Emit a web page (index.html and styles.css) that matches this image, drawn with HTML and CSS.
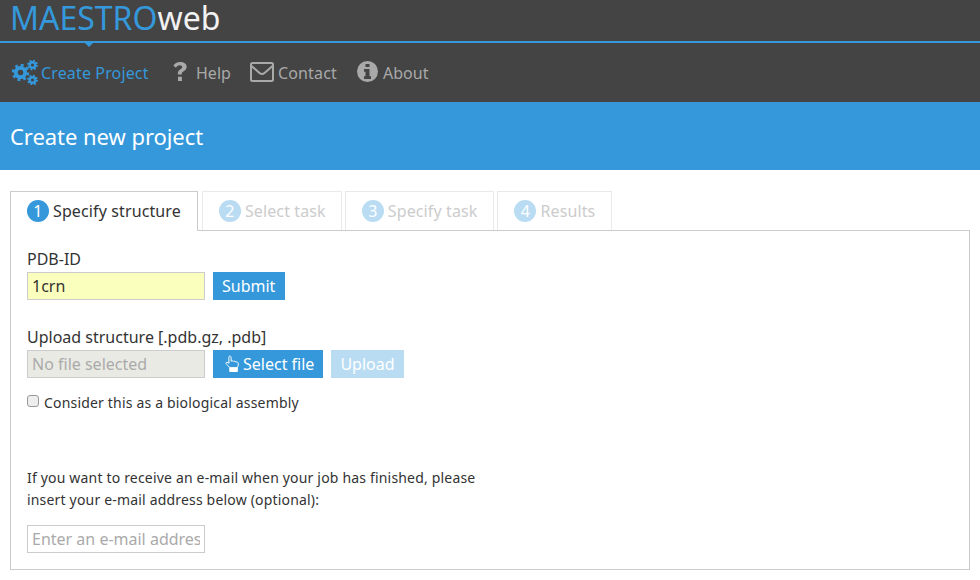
FILE: index.html
```html
<!DOCTYPE html>
<html lang="en">
<head>
<meta charset="utf-8">
<title>MAESTROweb</title>
<link rel="stylesheet" href="styles.css">
</head>
<body>
<header class="topbar">
  <h1 class="brand"><span class="brand-accent">MAESTRO</span>web</h1>
</header>
<nav class="nav">
  <a class="nav-item active">
    <svg class="icon-gears" width="28" height="26" viewBox="0 0 28 26" fill="none" stroke="#3498db">
      <circle cx="9.500" cy="13.500" r="4.700" stroke-width="3.800"/>
      <circle cx="9.500" cy="13.500" r="7.400" stroke-width="2.600" stroke-dasharray="2.900 2.910"/>
      <circle cx="21.500" cy="6" r="2.800" stroke-width="2.400"/>
      <circle cx="21.500" cy="6" r="4.500" stroke-width="1.800" stroke-dasharray="1.800 1.730"/>
      <circle cx="21.500" cy="21" r="2.800" stroke-width="2.400"/>
      <circle cx="21.500" cy="21" r="4.500" stroke-width="1.800" stroke-dasharray="1.800 1.730"/>
    </svg>
    <span>Create Project</span>
  </a>
  <a class="nav-item help">
    <svg class="icon-help" width="14" height="19" viewBox="0 0 14 19" fill="#a9a9a9">
      <path d="M7.300 0C3.700 0 1.500 1.600.4 3.700l2.600 2c.8-1.200 1.900-2.400 3.800-2.400 1.300 0 2.400.7 2.400 1.800 0 2.200-4.300 2.500-4.300 6.300v1h3.800v-.7c0-2.200 5-3 5-7C13.700 1.900 10.800 0 7.300 0zM5 14.800h3.900V19H5z"/>
    </svg>
    <span>Help</span>
  </a>
  <a class="nav-item contact">
    <svg class="icon-raised" width="24" height="20" viewBox="0 0 24 20" fill="none" stroke="#a9a9a9">
      <rect x="1" y="1" width="22" height="18" rx="1.500" stroke-width="2"/>
      <path d="M1.500 4l8 7c1.500 1.300 3.500 1.300 5 0l8-7" stroke-width="2"/>
    </svg>
    <span>Contact</span>
  </a>
  <a class="nav-item about">
    <svg class="icon-raised" width="21" height="21" viewBox="0 0 21 21">
      <circle cx="10.500" cy="10.500" r="10.500" fill="#a9a9a9"/>
      <path fill="#444" d="M8.500 3h4v3h-4zM7 8h5.500v7.200H14V18H7v-2.800h1.500V10.800H7z"/>
    </svg>
    <span>About</span>
  </a>
</nav>
<section class="banner">
  <h2 class="banner-title">Create new project</h2>
</section>
<main class="content">
  <ul class="tabs">
    <li class="tab active"><span class="num">1</span>Specify structure</li>
    <li class="tab"><span class="num">2</span>Select task</li>
    <li class="tab"><span class="num">3</span>Specify task</li>
    <li class="tab"><span class="num">4</span>Results</li>
  </ul>
  <div class="panel">
    <label class="label">PDB-ID</label>
    <div class="row">
      <input class="field filled" type="text" value="1crn">
      <button class="btn btn-submit">Submit</button>
    </div>
    <label class="label upload-label">Upload structure [.pdb.gz, .pdb]</label>
    <div class="row">
      <input class="field disabled" type="text" placeholder="No file selected" disabled>
      <button class="btn">
        <svg class="hand" width="15" height="18" viewBox="0 0 15 18" fill="none" stroke="#fff" stroke-width="1" stroke-linejoin="round">
          <path d="M4 1.500c.8-.8 1.900-.3 2 .6l.2 4.100c1-.5 1.900-.4 2.500.2.900-.3 1.600-.1 2.100.5 1.200-.2 2.500.4 2.600 1.800 0 1.500-.5 2.800-1 4H4.800c-.8-1.400-2.300-2.500-3.400-3.500-.8-.7-.5-1.800.4-1.900.8-.1 1.600.4 2.200 1l-.2-5.800c0-.4 0-.7.200-1z"/>
          <path d="M4.800 13h7.500v3.500H4.800z" fill="#fff"/>
        </svg>Select file
      </button>
      <button class="btn faded">Upload</button>
    </div>
    <label class="check">
      <input class="checkbox" type="checkbox">
      <span>Consider this as a biological assembly</span>
    </label>
    <p class="note">If you want to receive an e-mail when your job has finished, please<br>insert your e-mail address below (optional):</p>
    <input class="field" type="text" placeholder="Enter an e-mail address">
  </div>
</main>
</body>
</html>
```
FILE: styles.css
```css
* { box-sizing: border-box; }
html, body { margin: 0; padding: 0; }
body {
  width: 980px;
  height: 580px;
  overflow: hidden;
  background: #fff;
  color: #333;
  font-family: "Noto Sans", "Open Sans", "Liberation Sans", sans-serif;
}
.topbar {
  position: relative;
  height: 43px;
  background: #444;
  border-bottom: 2px solid #3498db;
}
.topbar::after {
  content: "";
  position: absolute;
  left: 83px;
  top: 41px;
  border-left: 6px solid transparent;
  border-right: 6px solid transparent;
  border-top: 6px solid #3498db;
}
.brand {
  margin: 0;
  padding: 2px 0 0 10px;
  font-size: 32px;
  font-weight: 400;
  line-height: 32px;
  color: #f2f2f2;
}
.brand-accent { color: #3498db; }
.nav {
  display: flex;
  height: 59px;
  background: #444;
  padding: 15px 0 0 11px;
}
.nav-item {
  display: flex;
  align-items: center;
  height: 30px;
  font-size: 16px;
  letter-spacing: 0.14px;
  color: #a9a9a9;
}
.nav-item.active { color: #3498db; width: 162px; gap: 2px; }
.nav-item.help { width: 77px; gap: 9px; letter-spacing: 0; }
.nav-item.contact { width: 107px; gap: 4px; }
.nav-item.about { gap: 5px; letter-spacing: 0; }
.icon-gears { margin-top: -2px; }
.icon-help { margin-top: -4px; }
.icon-raised { margin-top: -3px; }
.banner {
  height: 68px;
  background: #3498db;
  display: flex;
  align-items: center;
  padding-left: 10px;
}
.banner-title {
  margin: 0;
  font-size: 22px;
  font-weight: 400;
  letter-spacing: -0.05px;
  color: #fff;
}
.content { padding: 21px 10px 0; }
.tabs {
  display: flex;
  gap: 3px;
  margin: 0;
  padding: 0;
  list-style: none;
}
.tab {
  display: flex;
  align-items: center;
  gap: 4px;
  height: 39px;
  padding: 0 16px;
  font-size: 16px;
  letter-spacing: 0.12px;
  color: #ccc;
  background: #fff;
  border: 1px solid #e9e9e9;
  border-bottom: 0;
}
.tab.active {
  position: relative;
  height: 40px;
  margin-bottom: -1px;
  margin-right: 1px;
  padding-bottom: 1px;
  color: #333;
  border-color: #ccc;
  z-index: 1;
}
.tab.active + .tab { padding-right: 15px; }
.num {
  display: flex;
  align-items: center;
  justify-content: center;
  width: 22px;
  height: 22px;
  border-radius: 50%;
  background: #b9dcf3;
  color: #fff;
  font-size: 16px;
}
.tab.active .num { background: #3498db; }
.panel {
  height: 340px;
  padding: 18px 16px 0;
  border: 1px solid #ccc;
}
.label {
  display: block;
  font-size: 16px;
  line-height: 20px;
  color: #333;
}
.upload-label { margin-top: 27px; }
.row {
  display: flex;
  gap: 8px;
  margin-top: 3px;
}
.field {
  display: block;
  width: 178px;
  height: 28px;
  padding: 0 4px;
  border: 1px solid #ccc;
  border-radius: 0;
  outline: 0;
  background: #fff;
  color: #333;
  font-family: inherit;
  font-size: 16px;
}
.field::placeholder { color: #aaa; opacity: 1; }
.field.filled { background: #fbffbd; }
.field.disabled { background: #eaeae4; }
.btn {
  display: flex;
  align-items: center;
  height: 28px;
  padding: 0 9px;
  border: 0;
  background: #3498db;
  color: #fff;
  font-family: inherit;
  font-size: 16px;
}
.btn-submit { padding-right: 10px; }
.btn.faded { background: #b9dcf3; }
.hand { margin: 0 3px 0 3px; }
.check {
  display: flex;
  align-items: center;
  margin-top: 14px;
  height: 20px;
  font-size: 14px;
  letter-spacing: 0.18px;
  color: #333;
}
.checkbox {
  appearance: none;
  width: 12px;
  height: 12px;
  margin: 0 5px 2px 0;
  border: 1px solid #999;
  border-radius: 3px;
  background: #eee;
}
.note {
  margin: 55px 0 0;
  font-size: 14px;
  line-height: 22px;
  letter-spacing: 0.18px;
  color: #333;
}
.note + .field { margin-top: 14px; }
```
